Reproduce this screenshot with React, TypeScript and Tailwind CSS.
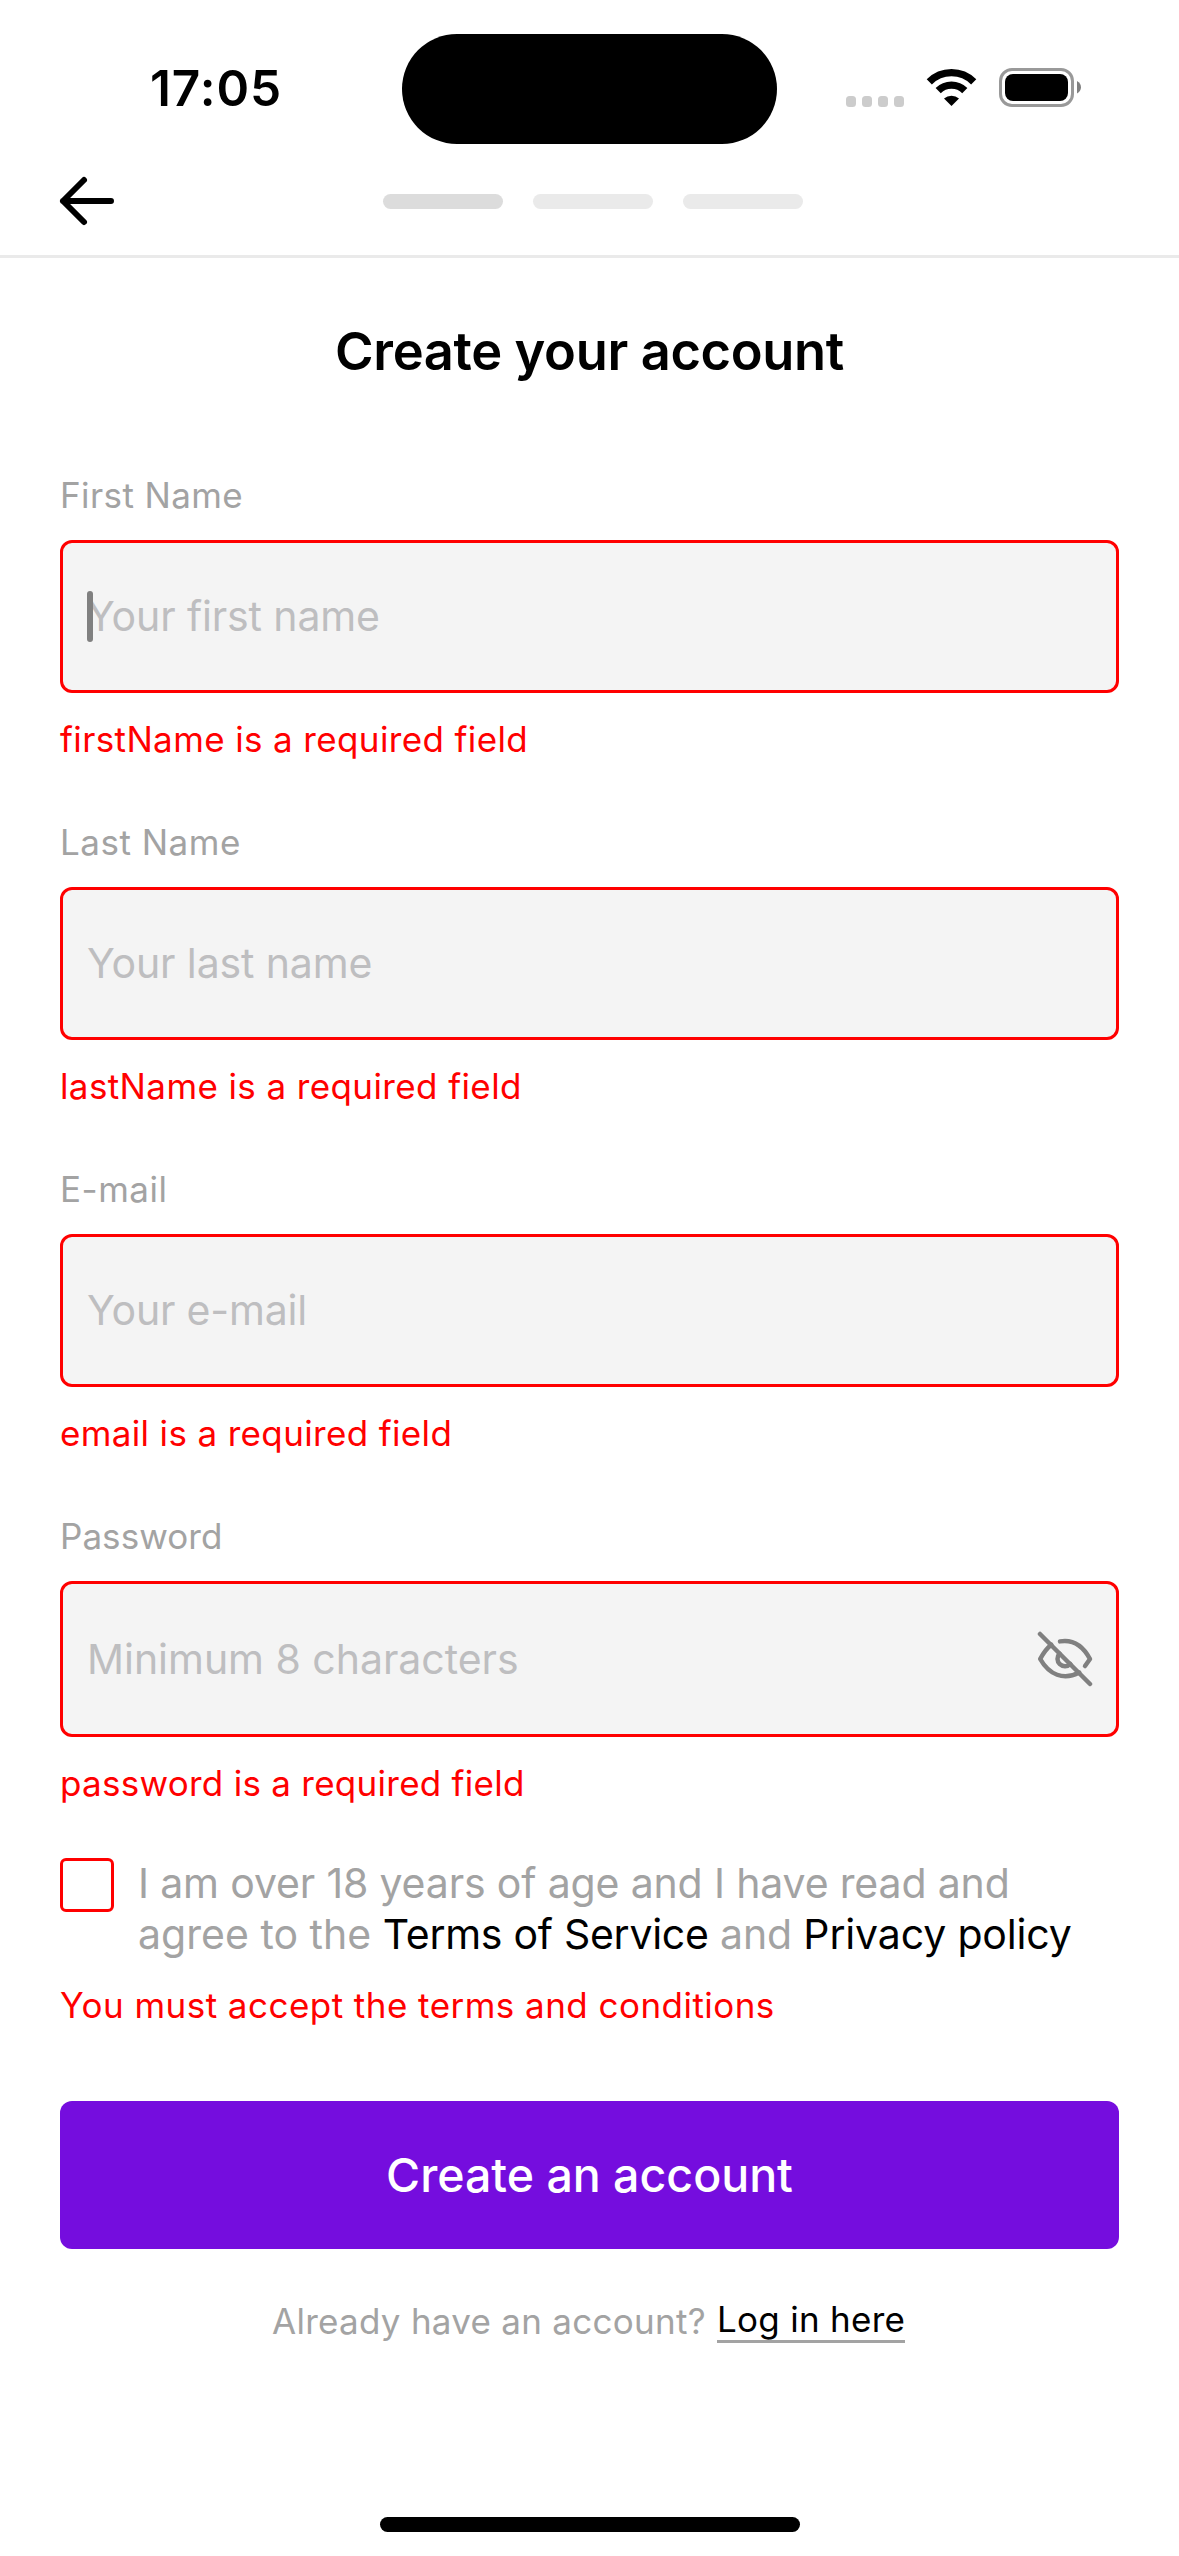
type FieldProps = {
  label: string;
  labelClass: string;
  placeholder: string;
  inputClass: string;
  error: string;
  errorClass: string;
  focused?: boolean;
  secure?: boolean;
};

const fields: FieldProps[] = [
  {
    label: "First Name",
    labelClass: "tracking-[0.4px]",
    placeholder: "Your first name",
    inputClass: "h-[153px] pb-[2px] tracking-[-0.12px]",
    error: "firstName is a required field",
    errorClass: "tracking-[0.37px]",
    focused: true,
  },
  {
    label: "Last Name",
    labelClass: "tracking-[0.5px]",
    placeholder: "Your last name",
    inputClass: "h-[153px] pb-[2px] tracking-[-0.13px]",
    error: "lastName is a required field",
    errorClass: "tracking-[0.39px]",
  },
  {
    label: "E-mail",
    labelClass: "tracking-[0.5px]",
    placeholder: "Your e-mail",
    inputClass: "h-[153px] pb-[2px] tracking-[-0.19px]",
    error: "email is a required field",
    errorClass: "tracking-[0.35px]",
  },
  {
    label: "Password",
    labelClass: "tracking-[0.05px]",
    placeholder: "Minimum 8 characters",
    inputClass: "h-[156px] tracking-[-0.03px]",
    error: "password is a required field",
    errorClass: "tracking-[0.27px]",
    secure: true,
  },
];

function EyeOff() {
  return (
    <svg
      className="absolute right-[26px] top-[50px] size-[56px]"
      viewBox="0 0 56 56"
      fill="none"
      stroke="#808080"
      strokeWidth="4.5"
      strokeLinecap="round"
      strokeLinejoin="round"
    >
      <path d="M3 3L53 53" />
      <path d="M23 10.4C35.5 8.3 46 15 53 28L48 35" />
      <path d="M14.3 13.7C9.5 17.5 6 22.5 3.2 28C12 43.5 26.5 50 42.3 41.5" />
      <path d="M22.6 22.6A7.3 7.3 0 1 0 33.4 33" />
    </svg>
  );
}

function Field({ label, labelClass, placeholder, inputClass, error, errorClass, focused, secure }: FieldProps) {
  return (
    <div className="flex flex-col">
      <label className={`text-[35px] leading-[40px] text-[#a3a3a3] ${labelClass}`}>{label}</label>
      <div className="relative mt-[25px]">
        <input
          placeholder={placeholder}
          className={`block w-full rounded-[12px] border-3 border-[#ff0000] bg-[#f4f4f4] pl-[24px] text-[41px] text-black outline-none placeholder:text-[#bebec0] ${inputClass}`}
        />
        {focused && <span className="absolute left-[27px] top-[51px] h-[51px] w-[6px] rounded-full bg-[#808080]" />}
        {secure && <EyeOff />}
      </div>
      <p className={`mt-[26px] text-[35px] leading-[40px] text-[#ff0000] ${errorClass}`}>{error}</p>
    </div>
  );
}

function StatusBar() {
  return (
    <div className="flex h-[177px] items-start">
      <div className="ml-[150px] mt-[58px] w-[252px] text-[49.5px] font-semibold leading-[60px] tracking-[0.94px]">17:05</div>
      <div className="mt-[33.5px] h-[110.5px] w-[375px] rounded-full bg-black" />
      <div className="ml-[69px] mt-[96px] flex gap-[6px]">
        {[0, 1, 2, 3].map((i) => (
          <span key={i} className="h-[10.5px] w-[10px] rounded-[3.5px] bg-[#cccccc]" />
        ))}
      </div>
      <svg className="ml-[22px] mt-[68px] h-[39px] w-[52px]" viewBox="0 0 52 39" fill="none" stroke="#000">
        <path strokeWidth="7.3" d="M3.3 13.8A31.4 31.4 0 0 1 47.7 13.8" />
        <path strokeWidth="7.3" d="M12.2 22.7A18.8 18.8 0 0 1 38.8 22.7" />
        <path fill="#000" stroke="none" d="M18 30.4A11.6 11.6 0 0 1 33 30.4L25.500 38Z" />
      </svg>
      <svg className="ml-[21px] mt-[68px] h-[39px] w-[83px]" viewBox="0 0 83 39">
        <rect x="1.5" y="1.5" width="72" height="36" rx="11.5" fill="none" stroke="#999" strokeWidth="3" />
        <rect x="6" y="6" width="63" height="27" rx="8" />
        <path d="M78 13Q82 15.5 82 19.300T78 25.5Z" fill="#808080" />
      </svg>
    </div>
  );
}

export default function App() {
  return (
    <div className="flex h-[2556px] w-[1179px] flex-col overflow-hidden bg-white font-['Inter',sans-serif] text-black">
      <StatusBar />

      <header className="flex h-[81px] items-start border-b-3 border-[#eaeaea] pl-[60px]">
        <svg
          className="h-[48px] w-[54px] overflow-visible"
          viewBox="0 0 54 48"
          fill="none"
          stroke="#000"
          strokeWidth="6"
          strokeLinecap="round"
          strokeLinejoin="round"
        >
          <path d="M51 24H3M24 3L3 24L24 45" />
        </svg>
        <div className="ml-[269px] mt-[17px] flex gap-[30px]">
          <span className="h-[15px] w-[120px] rounded-full bg-[#dcdcdc]" />
          <span className="h-[15px] w-[120px] rounded-full bg-[#eaeaea]" />
          <span className="h-[15px] w-[120px] rounded-full bg-[#eaeaea]" />
        </div>
      </header>

      <main className="flex flex-col px-[60px]">
        <h1 className="mt-[63px] text-center text-[52.4px] font-semibold leading-[60px] tracking-[-0.35px]">
          Create your account
        </h1>

        <form className="mt-[94px] flex flex-col gap-[63px]">
          {fields.map((f) => (
            <Field key={f.label} {...f} />
          ))}
        </form>

        <div className="mt-[55px] flex items-start">
          <span className="h-[54px] w-[54px] shrink-0 rounded-[6px] border-3 border-[#ff0000]" />
          <p className="ml-[24px] whitespace-pre text-[41px] leading-[51px] text-[#a3a3a3]">
            <span className="tracking-[-0.15px]">I am over 18 years of age and I have read and</span>
            <br />
            <span className="tracking-[0.02px]">agree to the </span>
            <span className="tracking-[-0.27px] text-black">Terms of Service</span>
            <span className="tracking-[-0.14px]"> and </span>
            <span className="tracking-[-0.15px] text-black">Privacy policy</span>
          </p>
        </div>
        <p className="mt-[25px] text-[35px] leading-[40px] tracking-[0.46px] text-[#ff0000]">
          You must accept the terms and conditions
        </p>

        <button className="mt-[76px] h-[148px] rounded-[12px] bg-[#750dde] pt-[2px] text-[46.5px] font-medium tracking-[-0.02px] text-white">
          Create an account
        </button>

        <div className="mt-[50px] flex items-start pl-[212px] text-[35px]">
          <span className="mt-[2px] w-[445px] whitespace-nowrap leading-[40px] tracking-[0.27px] text-[#a3a3a3]">
            Already have an account?
          </span>
          <a className="h-[44px] w-[188px] whitespace-nowrap border-b-3 border-[#a3a3a3] leading-[40px] tracking-[0.28px]">
            Log in here
          </a>
        </div>
      </main>

      <div className="mx-auto mt-[174px] h-[15px] w-[420px] rounded-full bg-black" />
    </div>
  );
}
